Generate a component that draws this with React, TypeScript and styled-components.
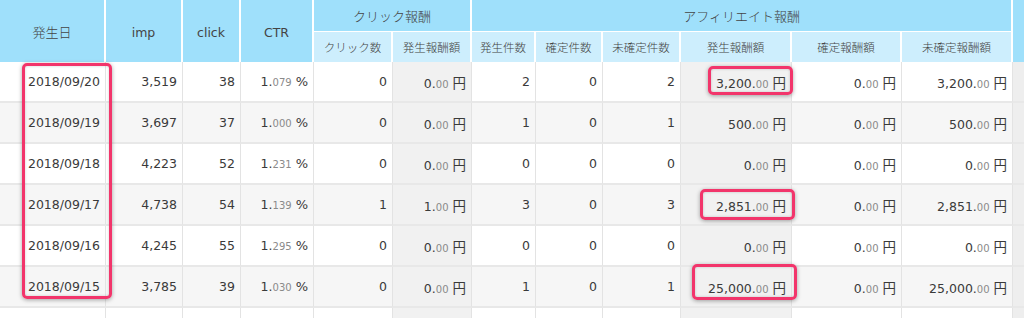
import React from 'react'
import styled, { createGlobalStyle } from 'styled-components'

const GlobalStyle = createGlobalStyle`
  body {
    margin: 0;
    background: #fff;
    overflow: hidden;
  }
  * {
    box-sizing: border-box;
  }
`

const headTop = '#9fe0fb'
const headSub = '#cdeefd'
const markColor = '#f2356b'

const colWidths = [106, 77, 58, 73, 79, 79, 64, 67, 78, 111, 110, 111, 100]

interface RowData {
  date: string
  imp: string
  click: string
  ctr: string
  clickCount: number
  clickReward: string
  count: number
  fixedCount: number
  openCount: number
  reward: string
  fixedReward: string
  openReward: string
}

const rows: RowData[] = [
  { date: '2018/09/20', imp: '3,519', click: '38', ctr: '079', clickCount: 0, clickReward: '0', count: 2, fixedCount: 0, openCount: 2, reward: '3,200', fixedReward: '0', openReward: '3,200' },
  { date: '2018/09/19', imp: '3,697', click: '37', ctr: '000', clickCount: 0, clickReward: '0', count: 1, fixedCount: 0, openCount: 1, reward: '500', fixedReward: '0', openReward: '500' },
  { date: '2018/09/18', imp: '4,223', click: '52', ctr: '231', clickCount: 0, clickReward: '0', count: 0, fixedCount: 0, openCount: 0, reward: '0', fixedReward: '0', openReward: '0' },
  { date: '2018/09/17', imp: '4,738', click: '54', ctr: '139', clickCount: 1, clickReward: '1', count: 3, fixedCount: 0, openCount: 3, reward: '2,851', fixedReward: '0', openReward: '2,851' },
  { date: '2018/09/16', imp: '4,245', click: '55', ctr: '295', clickCount: 0, clickReward: '0', count: 0, fixedCount: 0, openCount: 0, reward: '0', fixedReward: '0', openReward: '0' },
  { date: '2018/09/15', imp: '3,785', click: '39', ctr: '030', clickCount: 0, clickReward: '0', count: 1, fixedCount: 0, openCount: 1, reward: '25,000', fixedReward: '0', openReward: '25,000' },
]

// annotation boxes drawn over the table
const marks = [
  { x: 22, y: 63, w: 90, h: 236 },
  { x: 708, y: 66, w: 85, h: 29 },
  { x: 700, y: 189, w: 95, h: 31 },
  { x: 692, y: 264, w: 105, h: 36 },
]

const Wrap = styled.div`
  position: relative;
  width: 1024px;
  height: 318px;
  overflow: hidden;
  font-family: 'DejaVu Sans', 'Noto Sans CJK JP', sans-serif;
  color: #3a3a3a;
`

const Table = styled.table`
  border-collapse: separate;
  border-spacing: 0;
  table-layout: fixed;
  width: ${colWidths.reduce((a, b) => a + b, 0)}px;
`

const Th = styled.th<{ $sub?: boolean; $split?: boolean }>`
  background: ${p => (p.$sub ? headSub : headTop)};
  font-family: 'Noto Sans CJK JP', sans-serif;
  font-weight: 300;
  font-size: ${p => (p.$sub ? '11.5px' : '13px')};
  color: #444;
  text-align: center;
  padding: 0;
  border-right: 2px solid #fff;
  border-bottom: ${p => (p.$split ? '1px solid #fff' : '0')};
  height: ${p => (p.$sub ? '30px' : '32px')};
  white-space: nowrap;
`

const Latin = styled.span`
  font-family: 'DejaVu Sans', sans-serif;
  font-weight: normal;
  font-size: 12.5px;
`

const Tr = styled.tr<{ $even: boolean }>`
  background: ${p => (p.$even ? '#f6f6f6' : '#fff')};
`

const Td = styled.td<{ $shade?: boolean; $edge?: boolean }>`
  height: 41px;
  padding: 0 5px 0 0;
  text-align: right;
  font-size: 12.5px;
  white-space: nowrap;
  border-right: 1px solid #e3e3e3;
  border-bottom: 2px solid #e8e8e8;
  background: ${p => (p.$edge ? '#eeeeee' : p.$shade ? '#f1f1f1' : 'transparent')};
`

const Small = styled.span`
  font-size: 10px;
  color: #8a8a8a;
`

const Unit = styled.span`
  font-family: 'Noto Sans CJK JP', sans-serif;
  font-size: 13.5px;
  margin-left: 4px;
`

const Pct = styled.span`
  font-size: 13px;
  margin-left: 4px;
`

const Mark = styled.div<{ $x: number; $y: number; $w: number; $h: number }>`
  position: absolute;
  left: ${p => p.$x}px;
  top: ${p => p.$y}px;
  width: ${p => p.$w}px;
  height: ${p => p.$h}px;
  border: 3px solid ${markColor};
  border-radius: 5px;
  box-shadow: 0 1px 4px rgba(0, 0, 0, 0.35), inset 0 0 3px rgba(0, 0, 0, 0.18);
  pointer-events: none;
`

const Money = ({ v }: { v: string }) => (
  <>
    {v}.<Small>00</Small>
    <Unit>円</Unit>
  </>
)

const Rate = ({ d }: { d: string }) => (
  <>
    1.<Small>{d}</Small>
    <Pct>%</Pct>
  </>
)

export default function App() {
  return (
    <Wrap>
      <GlobalStyle />
      <Table>
        <colgroup>
          {colWidths.map((w, i) => (
            <col key={i} style={{ width: w }} />
          ))}
        </colgroup>
        <thead>
          <tr>
            <Th rowSpan={2}>発生日</Th>
            <Th rowSpan={2}><Latin>imp</Latin></Th>
            <Th rowSpan={2}><Latin>click</Latin></Th>
            <Th rowSpan={2}><Latin>CTR</Latin></Th>
            <Th colSpan={2} $split>クリック報酬</Th>
            <Th colSpan={6} $split>アフィリエイト報酬</Th>
            <Th rowSpan={2} />
          </tr>
          <tr>
            <Th $sub>クリック数</Th>
            <Th $sub>発生報酬額</Th>
            <Th $sub>発生件数</Th>
            <Th $sub>確定件数</Th>
            <Th $sub>未確定件数</Th>
            <Th $sub>発生報酬額</Th>
            <Th $sub>確定報酬額</Th>
            <Th $sub>未確定報酬額</Th>
          </tr>
        </thead>
        <tbody>
          {rows.map((r, i) => (
            <Tr key={r.date} $even={i % 2 === 1}>
              <Td>{r.date}</Td>
              <Td>{r.imp}</Td>
              <Td>{r.click}</Td>
              <Td><Rate d={r.ctr} /></Td>
              <Td>{r.clickCount}</Td>
              <Td $shade><Money v={r.clickReward} /></Td>
              <Td>{r.count}</Td>
              <Td>{r.fixedCount}</Td>
              <Td>{r.openCount}</Td>
              <Td $shade><Money v={r.reward} /></Td>
              <Td><Money v={r.fixedReward} /></Td>
              <Td><Money v={r.openReward} /></Td>
              <Td $edge />
            </Tr>
          ))}
          <Tr $even={false}>
            {colWidths.map((_, i) => (
              <Td key={i} $shade={i === 5 || i === 9} $edge={i === 12} />
            ))}
          </Tr>
        </tbody>
      </Table>
      {marks.map((m, i) => (
        <Mark key={i} $x={m.x} $y={m.y} $w={m.w} $h={m.h} />
      ))}
    </Wrap>
  )
}
